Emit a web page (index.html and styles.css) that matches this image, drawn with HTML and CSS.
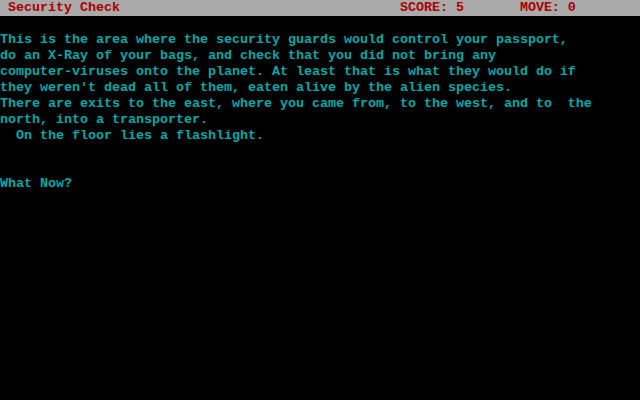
FILE: index.html
```html
<!DOCTYPE html>
<html>
<head>
<meta charset="utf-8">
<link rel="stylesheet" href="styles.css">
</head>
<body>
<div class="screen">
<div class="status"><span class="cell"> Security Check                                   SCORE: 5       MOVE: 0</span></div>
<pre class="text">This is the area where the security guards would control your passport,
do an X-Ray of your bags, and check that you did not bring any
computer-viruses onto the planet. At least that is what they would do if
they weren't dead all of them, eaten alive by the alien species.
There are exits to the east, where you came from, to the west, and to  the
north, into a transporter.
  On the floor lies a flashlight.


What Now?</pre>
</div>
</body>
</html>
```
FILE: styles.css
```css
html, body {
  margin: 0;
  padding: 0;
  background: #000000;
}
.screen {
  width: 640px;
  height: 400px;
  background: #000000;
  overflow: hidden;
  font-family: "Liberation Mono", "DejaVu Sans Mono", monospace;
  font-size: 13.3333px;
  font-weight: bold;
  line-height: 16px;
}
.status {
  height: 16px;
  background: #aaaaaa;
  color: #aa0000;
  white-space: pre;
}
.text {
  margin: 0;
  padding: 16px 0 0 0;
  color: #00aaaa;
  font: inherit;
  white-space: pre;
}
```
